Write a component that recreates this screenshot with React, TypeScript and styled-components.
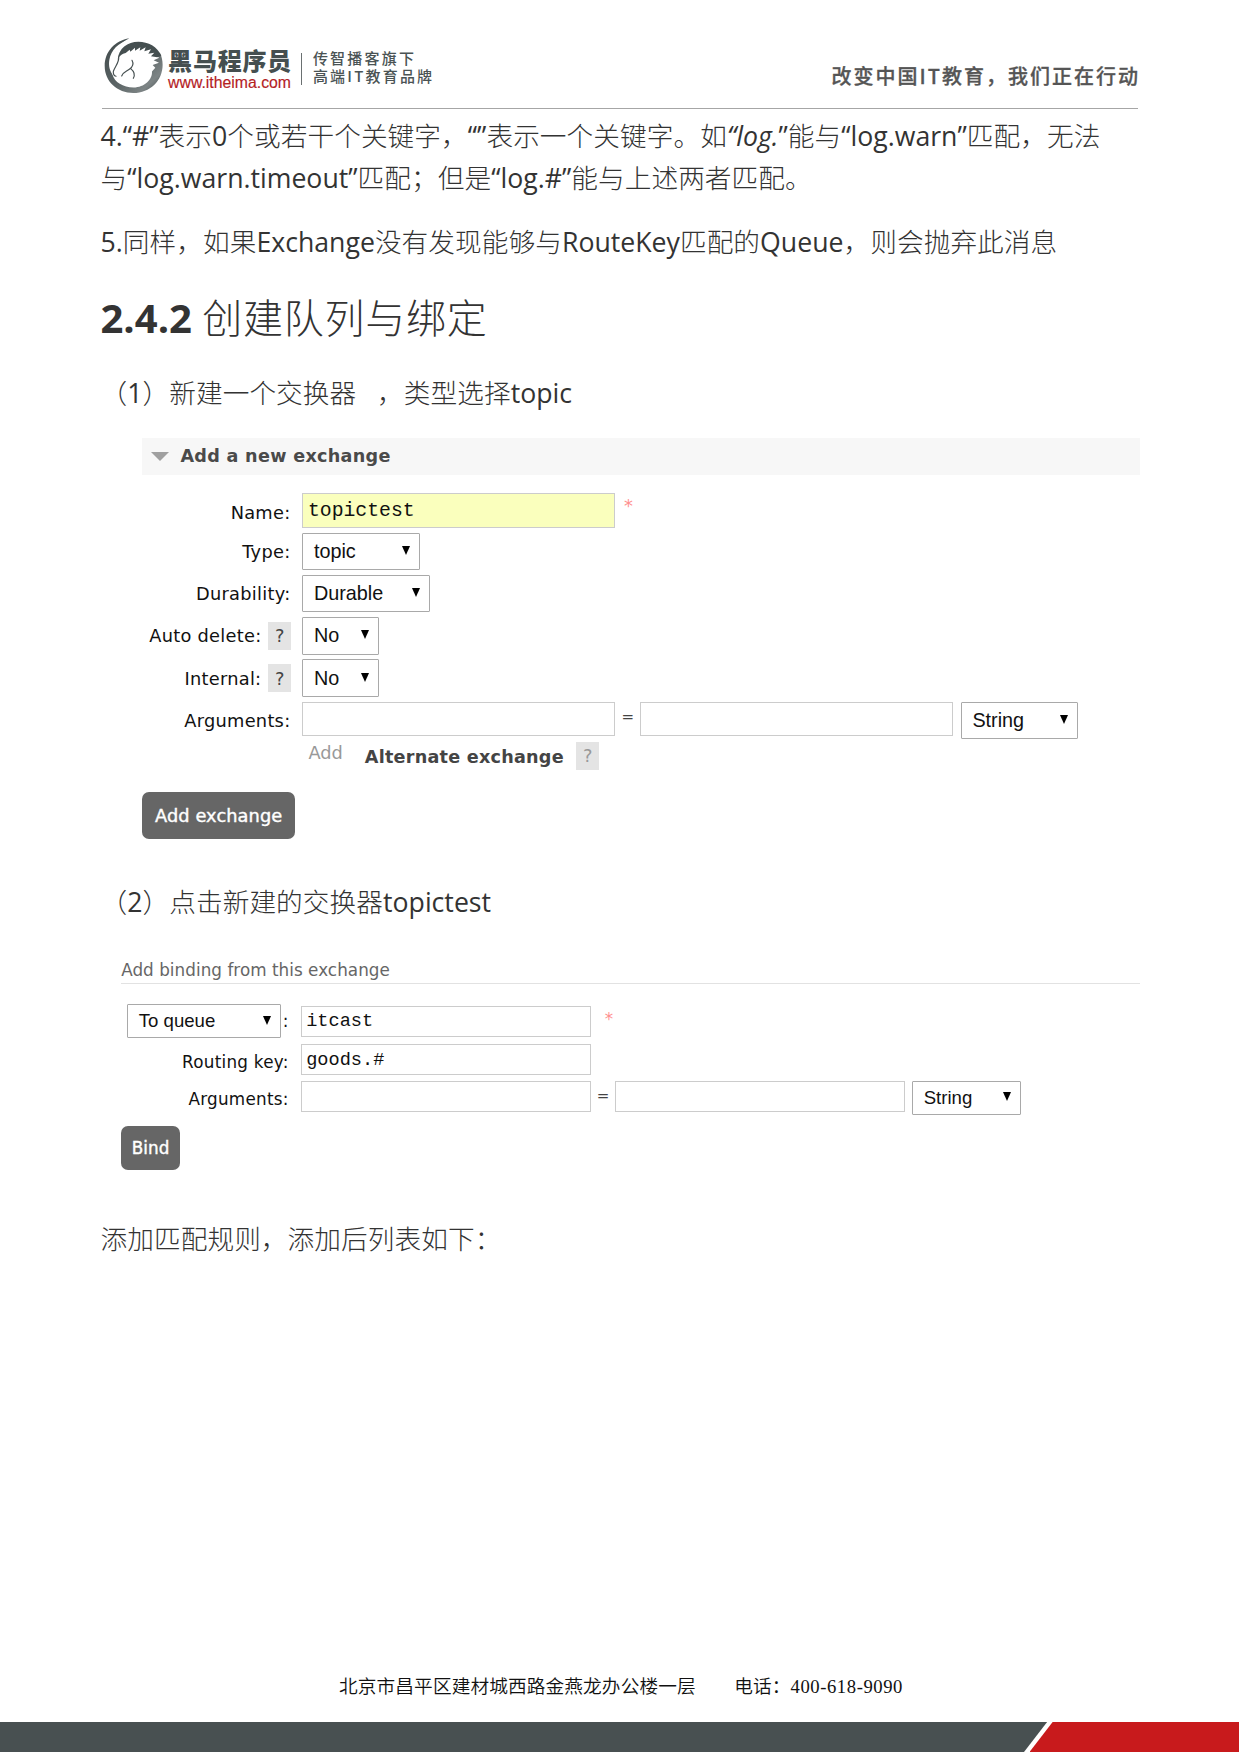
import React from "react";
import styled, { createGlobalStyle } from "styled-components";

const GlobalStyle = createGlobalStyle`
  * { box-sizing: border-box; }
  html, body { margin: 0; padding: 0; background: #fff; }
  body { font-family: "Open Sans", "Noto Sans CJK SC", sans-serif; color: #333; }
`;

const Page = styled.div`
  width: 1240px;
  height: 1752px;
  display: flex;
  flex-direction: column;
  background: #fff;
  overflow: hidden;
`;

/* ---------- header ---------- */

const Header = styled.header`
  height: 109px;
  margin: 0 102px;
  border-bottom: 1.5px solid #a6a6a6;
  display: flex;
  justify-content: space-between;
  align-items: flex-start;
  flex: none;
`;

const Brand = styled.div`
  display: flex;
  align-items: flex-start;
  padding-top: 37px;
`;

const Horse = styled.svg`
  width: 62px;
  height: 57.6px;
  margin-left: 1.3px;
  display: block;
`;

const BrandName = styled.div`
  width: 128px;
  margin: 11px 0 0 2.8px;
  white-space: nowrap;
`;

const BrandTitle = styled.div`
  font: 900 24px/28px "Liberation Sans", "Noto Sans CJK SC", sans-serif;
  letter-spacing: 0.8px;
  color: #454f50;
`;

const BrandUrl = styled.div`
  font: 400 15.8px/18px "Liberation Sans", sans-serif;
  color: #b4211f;
  margin-top: -2.5px;
  -webkit-text-stroke: 0.15px #b4211f;
`;

const BrandRule = styled.div`
  width: 1px;
  height: 32px;
  margin: 16px 0 0 5px;
  background: #6a7071;
`;

const BrandTag = styled.div`
  margin: 12px 0 0 10.8px;
  font: 500 15px/18px "Noto Sans CJK SC", sans-serif;
  letter-spacing: 2.2px;
  color: #4a5354;
  white-space: nowrap;
`;

const Slogan = styled.div`
  padding-top: 61px;
  margin-right: -2px;
  font: 500 20px/30px "Noto Sans CJK SC", sans-serif;
  letter-spacing: 2px;
  color: #555;
  -webkit-text-stroke: 0.3px #555;
  white-space: nowrap;
`;

/* ---------- article ---------- */

const Article = styled.main`
  flex: 1;
  padding-left: 100.5px;
`;

const Paragraph = styled.p<{ $gap: number }>`
  margin: ${(p) => p.$gap}px 0 0;
  font-size: 26.67px;
  line-height: 42px;
  white-space: pre;
`;

const Heading = styled.h3<{ $gap: number }>`
  margin: ${(p) => p.$gap}px 0 0;
  font-size: 40px;
  line-height: 50px;
  font-weight: 700;
  white-space: pre;
`;

const Han = styled.span`
  font-family: "Noto Sans CJK SC", sans-serif;
  font-weight: 300;
  line-height: 0;
  letter-spacing: 0.07px;
`;

const HeadingHan = styled(Han)`
  letter-spacing: 0.75px;
`;

const Mixed = ({ text }: { text: string }) => (
  <>
    {text.split(/([\u3000-\u9fff\uff00-\uffef]+)/).map((run, i) =>
      i % 2 ? <Han key={i}>{run}</Han> : run
    )}
  </>
);

/* ---------- management console forms ---------- */

const Panel = styled.section<{ $left: number; $gap: number; $size: number }>`
  margin: ${(p) => p.$gap}px 0 0 ${(p) => p.$left}px;
  font-family: "DejaVu Sans", sans-serif;
  font-size: ${(p) => p.$size}px;
  color: #111;
  white-space: nowrap;
`;

const PanelBar = styled.div`
  width: 998px;
  height: 37.3px;
  margin-bottom: 18.3px;
  display: flex;
  align-items: center;
  padding: 0 0 1px 9px;
  background: #f7f7f7;
  color: #4a4a4a;
  font-weight: 700;
  font-size: 17.6px;
  letter-spacing: 0.3px;
`;

const Fold = styled.i`
  width: 0;
  height: 0;
  border: 9px solid transparent;
  border-top: 9px solid #a0a0a0;
  border-bottom: 0;
  margin: 2px 11px 0 0;
`;

const PanelTitle = styled.div`
  width: 1019px;
  height: 26.5px;
  margin-bottom: 19.8px;
  line-height: 24px;
  letter-spacing: 0.04px;
  border-bottom: 1.5px solid #e2e2e2;
  color: #666;
`;

const FormRow = styled.div<{ $h: number; $labelWidth: number }>`
  display: grid;
  grid-template-columns: ${(p) => p.$labelWidth}px auto;
  height: ${(p) => p.$h}px;
`;

const Label = styled.div<{ $drop?: number }>`
  display: flex;
  justify-content: flex-end;
  align-items: center;
  height: 36px;
  margin-top: ${(p) => p.$drop ?? 0}px;
  padding-right: 12px;
  letter-spacing: 0.26px;
`;

const Help = styled.span<{ $faded?: boolean }>`
  width: 23px;
  height: 28.5px;
  display: inline-flex;
  align-items: center;
  justify-content: center;
  background: #e4e4e4;
  color: ${(p) => (p.$faded ? "#999" : "#444")};
`;

const LabelHelp = styled(Help)`
  margin: 0 -1px 0 7px;
`;

const Controls = styled.div<{ $drop?: number }>`
  display: flex;
  align-items: flex-start;
  padding-top: ${(p) => p.$drop ?? 0}px;
`;

const Field = styled.div<{ $w: number; $h: number; $filled?: boolean; $size: number }>`
  width: ${(p) => p.$w}px;
  height: ${(p) => p.$h}px;
  border: 1.5px solid #ccc;
  background: ${(p) => (p.$filled ? "#faffbd" : "#fff")};
  padding: 1.5px 5px 0 4.5px;
  font: ${(p) => p.$size}px / ${(p) => p.$h - 3}px "Liberation Mono", monospace;
  color: #111;
`;

const Select = styled.div<{ $w: number; $h: number; $size: number; $after: number; $before: number }>`
  width: ${(p) => p.$w}px;
  height: ${(p) => p.$h}px;
  margin: 0 ${(p) => p.$after}px 0 ${(p) => p.$before}px;
  border: 1.5px solid #a9a9a9;
  border-radius: 1px;
  display: flex;
  align-items: center;
  justify-content: space-between;
  padding: 0 9.5px 0 10.5px;
  font: ${(p) => p.$size}px "Liberation Sans", sans-serif;
  letter-spacing: 0;
  color: #111;
`;

const Arrow = styled.i`
  width: 0;
  height: 0;
  border: 4.7px solid transparent;
  border-top: 9px solid #000;
  border-bottom: 0;
  margin-top: -2px;
`;

const Required = styled.span<{ $gap: number }>`
  margin: 2px 0 0 ${(p) => p.$gap}px;
  line-height: 22px;
  color: #ff8f8f;
`;

const Equals = styled.span<{ $w: number; $line: number }>`
  width: ${(p) => p.$w}px;
  text-align: center;
  font-size: 15px;
  line-height: ${(p) => p.$line}px;
  color: #444;
`;

const Hints = styled.div`
  display: flex;
  align-items: flex-start;
  height: 30px;
  padding-left: 166px;
  line-height: 22px;
  color: #999;
`;

const HintName = styled.b`
  color: #444;
  margin: 4px 12.5px 0 22px;
  font-size: 17.6px;
  letter-spacing: 0.24px;
`;

const Submit = styled.div<{ $w: number; $h: number; $gap: number }>`
  width: ${(p) => p.$w}px;
  height: ${(p) => p.$h}px;
  margin-top: ${(p) => p.$gap}px;
  border-radius: 7px;
  background: #666;
  color: #fff;
  display: flex;
  align-items: center;
  justify-content: center;
  letter-spacing: 0.08px;
  -webkit-text-stroke: 0.4px #fff;
`;

type DropdownProps = {
  text: string;
  w: number;
  h?: number;
  size?: number;
  before?: number;
  after?: number;
};

const Dropdown = ({ text, w, h = 37.5, size = 19.8, before = 0, after = 0 }: DropdownProps) => (
  <Select $w={w} $h={h} $size={size} $before={before} $after={after}>
    {text}
    <Arrow />
  </Select>
);

/* ---------- footer ---------- */

const Address = styled.div`
  display: flex;
  height: 26px;
  margin: 0 0 22px 339px;
  font: 350 18.67px/26px "Liberation Serif", "Noto Sans CJK SC", serif;
  letter-spacing: 0.12px;
  color: #111;
  white-space: nowrap;
`;

const Phone = styled.span`
  margin-left: 38.5px;
`;

const Digits = styled.span`
  letter-spacing: 0.55px;
`;

const FooterBar = styled.footer`
  display: flex;
  height: 30.5px;
  flex: none;
  margin-right: 1px;
`;

const GreyBand = styled.div`
  width: 1047.5px;
  background: #485051;
  clip-path: polygon(0 0, 100% 0, calc(100% - 23.5px) 100%, 0 100%);
`;

const RedBand = styled.div`
  flex: 1;
  margin-left: -18px;
  background: #c81a1c;
  clip-path: polygon(23.5px 0, 100% 0, 100% 100%, 0 100%);
`;

export default function App() {
  return (
    <Page>
      <GlobalStyle />
      <Header>
        <Brand>
          <Horse viewBox="40 36 186 173">
            <defs>
              <linearGradient id="ring" x1="0" y1="0" x2="1" y2="1">
                <stop offset="0" stopColor="#3f494a" />
                <stop offset="0.55" stopColor="#5d6667" />
                <stop offset="0.8" stopColor="#7d8485" />
                <stop offset="1" stopColor="#3f494a" />
              </linearGradient>
            </defs>
            <path
              fill="url(#ring)"
              d="M119 40C76 47 45 80 45 123C45 170 83 204 131 204C181 204 219 167 219 119C219 106 216 94 211 84L196 92L209 98L192 106L208 113L189 120L197 128L187 140C189 164 164 188 132 188C100 187 74 172 68 148C58 108 75 61 119 40Z"
            />
            <path fill="#fff" d="M116 45C78 62 62 100 70 150C60 138 56 122 59 104C64 76 86 53 116 45Z" />
            <path
              fill="#454f50"
              d="M84 104C86 70 114 50 146 50C176 50 203 65 215 92L203 97L184 94L194 83L176 86L184 73L164 79L168 67L150 77L152 67L136 77L136 68L122 80L120 74L108 84C97 86 90 92 84 104Z"
            />
            <path
              fill="none"
              stroke="#454f50"
              strokeWidth="3.5"
              strokeLinecap="round"
              d="M87 96C89 112 76 124 71 139C70 148 74 153 79 154M127 106C133 117 129 126 119 133C110 140 100 142 96 153M123 131C133 139 137 149 131 160"
            />
          </Horse>
          <BrandName>
            <BrandTitle>黑马程序员</BrandTitle>
            <BrandUrl>www.itheima.com</BrandUrl>
          </BrandName>
          <BrandRule />
          <BrandTag>
            传智播客旗下
            <br />
            高端IT教育品牌
          </BrandTag>
        </Brand>
        <Slogan>改变中国IT教育，我们正在行动</Slogan>
      </Header>

      <Article>
        <Paragraph $gap={6.2}>
          <Mixed text="4.“#”表示0个或若干个关键字，“”表示一个关键字。如" />
          <em>“log.</em>
          <Mixed text="”能与“log.warn”匹配，无法" />
          <br />
          <Mixed text="与“log.warn.timeout”匹配；但是“log.#”能与上述两者匹配。" />
        </Paragraph>
        <Paragraph $gap={22}>
          <Mixed text="5.同样，如果Exchange没有发现能够与RouteKey匹配的Queue，则会抛弃此消息" />
        </Paragraph>
        <Heading $gap={29.5}>
          2.4.2 <HeadingHan>创建队列与绑定</HeadingHan>
        </Heading>
        <Paragraph $gap={29.5}>
          <Mixed text="（1）新建一个交换器   ，类型选择topic" />
        </Paragraph>

        <Panel $left={41.9} $gap={23.6} $size={17.8}>
          <PanelBar>
            <Fold />
            Add a new exchange
          </PanelBar>
          <FormRow $h={39.4} $labelWidth={160}>
            <Label $drop={1}>Name:</Label>
            <Controls>
              <Field $w={313} $h={34.5} $size={19.8} $filled>topictest</Field>
              <Required $gap={8.5}>*</Required>
            </Controls>
          </FormRow>
          <FormRow $h={42.2} $labelWidth={160}>
            <Label $drop={1}>Type:</Label>
            <Controls><Dropdown text="topic" w={118} /></Controls>
          </FormRow>
          <FormRow $h={42.2} $labelWidth={160}>
            <Label $drop={0.8}>Durability:</Label>
            <Controls><Dropdown text="Durable" w={128} /></Controls>
          </FormRow>
          <FormRow $h={42.2} $labelWidth={160}>
            <Label $drop={0.8}>Auto delete:<LabelHelp>?</LabelHelp></Label>
            <Controls><Dropdown text="No" w={77} /></Controls>
          </FormRow>
          <FormRow $h={42.5} $labelWidth={160}>
            <Label $drop={0.8}>Internal:<LabelHelp>?</LabelHelp></Label>
            <Controls><Dropdown text="No" w={77} /></Controls>
          </FormRow>
          <FormRow $h={40} $labelWidth={160}>
            <Label $drop={0.5}>Arguments:</Label>
            <Controls>
              <Field $w={313} $h={34.5} $size={19.8} />
              <Equals $w={25} $line={30}>=</Equals>
              <Field $w={313} $h={34.5} $size={19.8} />
              <Dropdown text="String" w={117.5} before={7.5} />
            </Controls>
          </FormRow>
          <Hints>
            Add
            <HintName>Alternate exchange</HintName>
            <Help $faded>?</Help>
          </Hints>
          <Submit $w={152.5} $h={47} $gap={20}>Add exchange</Submit>
        </Panel>

        <Paragraph $gap={41.8}>
          <Mixed text="（2）点击新建的交换器topictest" />
        </Paragraph>

        <Panel $left={20.7} $gap={35.2} $size={16.8}>
          <PanelTitle>Add binding from this exchange</PanelTitle>
          <FormRow $h={40} $labelWidth={179.5}>
            <Label $drop={-1}>
              <Dropdown text="To queue" w={154} h={34} size={18.6} after={1.5} />:
            </Label>
            <Controls $drop={1.7}>
              <Field $w={290.5} $h={31} $size={18.6}>itcast</Field>
              <Required $gap={13.5}>*</Required>
            </Controls>
          </FormRow>
          <FormRow $h={36.4} $labelWidth={179.5}>
            <Label $drop={-0.2}>Routing key:</Label>
            <Controls>
              <Field $w={290.5} $h={31} $size={18.6}>goods.#</Field>
            </Controls>
          </FormRow>
          <FormRow $h={36} $labelWidth={179.5}>
            <Label $drop={0.5}>Arguments:</Label>
            <Controls>
              <Field $w={290.5} $h={31} $size={18.6} />
              <Equals $w={23.5} $line={30}>=</Equals>
              <Field $w={290.5} $h={31} $size={18.6} />
              <Dropdown text="String" w={109} h={34} size={18.6} before={7} />
            </Controls>
          </FormRow>
          <Submit $w={59} $h={44} $gap={9.3}>Bind</Submit>
        </Panel>

        <Paragraph $gap={48}>
          <Mixed text="添加匹配规则，添加后列表如下：" />
        </Paragraph>
      </Article>

      <Address>
        北京市昌平区建材城西路金燕龙办公楼一层
        <Phone>电话：<Digits>400-618-9090</Digits></Phone>
      </Address>
      <FooterBar>
        <GreyBand />
        <RedBand />
      </FooterBar>
    </Page>
  );
}
